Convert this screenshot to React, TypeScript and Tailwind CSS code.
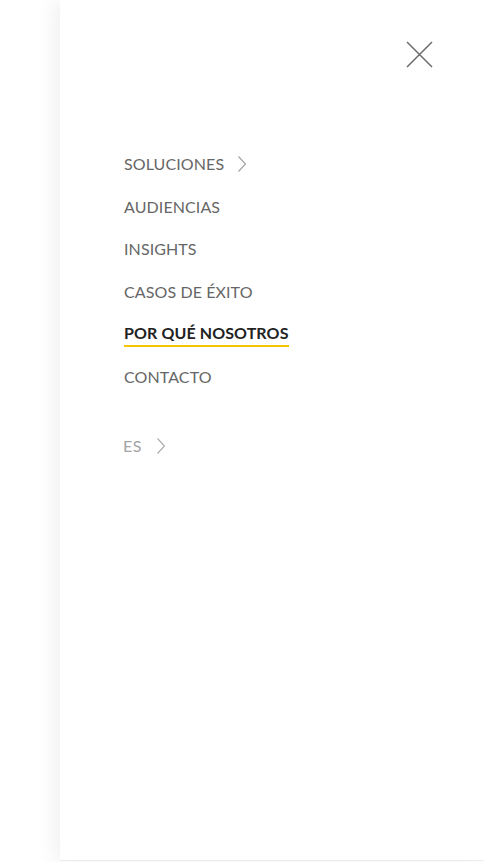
import React from "react";

const items = [
  { label: "SOLUCIONES", arrow: true },
  { label: "AUDIENCIAS" },
  { label: "INSIGHTS" },
  { label: "CASOS DE ÉXITO" },
  { label: "POR QUÉ NOSOTROS", active: true },
  { label: "CONTACTO" },
];

const Chevron = ({ className }: { className?: string }) => (
  <svg width="10" height="18" viewBox="0 0 10 18" fill="none" className={className}>
    <path d="M1.5 1.5 L8.5 9 L1.5 16.5" stroke="currentColor" strokeWidth="1.1" />
  </svg>
);

export default function App() {
  return (
    <div className="w-[484px] h-[862px] bg-white overflow-hidden flex justify-end" style={{ fontFamily: "Lato, 'Liberation Sans', sans-serif" }}>
      {/* Menu panel */}
      <div className="w-[424px] h-[861px] bg-white shadow-[-6px_0_18px_rgba(0,0,0,0.06)] border-b border-[#ececec] flex flex-col">
        {/* Close */}
        <div className="flex justify-end pt-[41px] pr-[51px]">
          <svg width="27" height="27" viewBox="0 0 27 27" className="text-[#6b6b6b]">
            <path d="M1 1 L26 26 M26 1 L1 26" stroke="currentColor" strokeWidth="1.5" />
          </svg>
        </div>

        {/* Nav */}
        <nav className="pl-[64px] pt-[84px] flex flex-col gap-[18.6px]">
          {items.map((it) => (
            <div key={it.label} className="flex items-center h-[24px]">
              <span
                className={
                  it.active
                    ? "text-[16px] leading-[24px] font-bold text-[#222] border-b-2 border-[#f2c500] tracking-[0.1px]"
                    : "text-[16px] leading-[24px] text-[#666] tracking-[0.1px]"
                }
              >
                {it.label}
              </span>
              {it.arrow && <Chevron className="ml-[13px] text-[#a0a0a0]" />}
            </div>
          ))}
        </nav>

        {/* Language */}
        <div className="pl-[63px] pt-[45px] flex items-center h-[24px] mt-[12px]">
          <span className="text-[16px] text-[#a3a3a3] tracking-[0.5px]">ES</span>
          <Chevron className="ml-[14px] text-[#ababab]" />
        </div>
      </div>
    </div>
  );
}
